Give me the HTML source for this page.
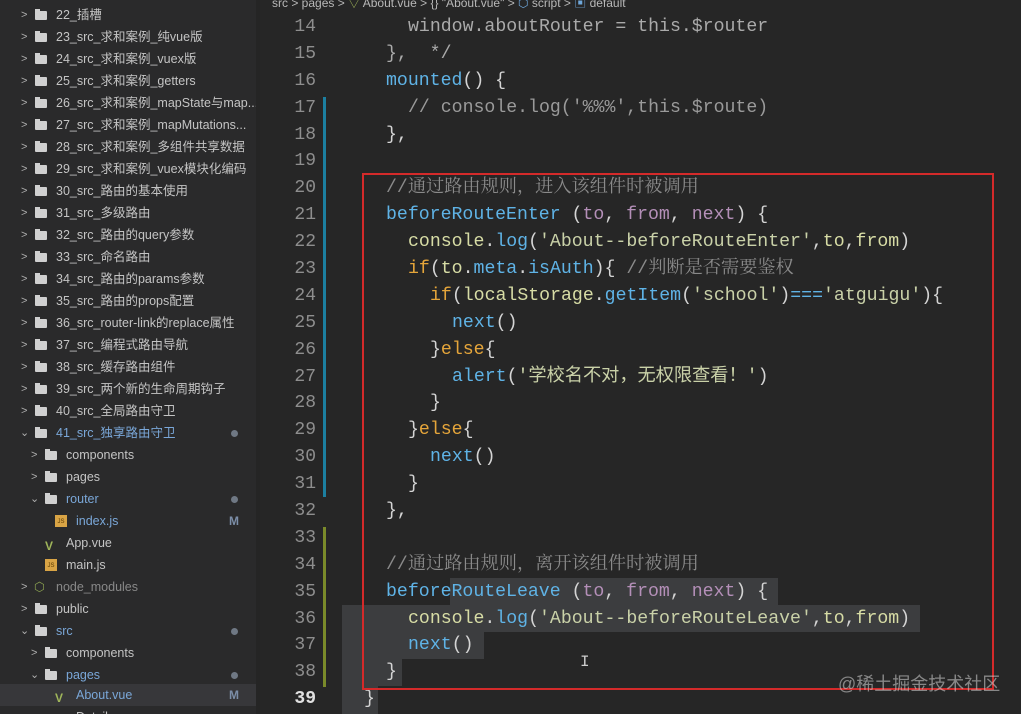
<!DOCTYPE html>
<html style="overflow:hidden;width:1021px;height:714px"><head><meta charset="utf-8"><style>
*{margin:0;padding:0;box-sizing:border-box}
html,body{overflow:hidden}
body{width:1021px;height:714px;overflow:hidden;background:#252525;position:relative;font-family:"Liberation Sans","Noto Sans CJK SC",sans-serif}
#side{position:absolute;left:0;top:0;width:256px;height:714px;background:#2a2a2b;overflow:hidden}
.r{position:absolute;left:0;width:256px;height:22px;line-height:22px;font-size:12.5px;color:#c4c4c4;white-space:nowrap;overflow:hidden}
.r .ch{position:absolute;top:0;color:#b0b0b0;font-size:11px}
.r .f{position:absolute;top:7px;width:12px;height:9px;background:#d0d0d0;border-radius:1px}
.r .f:before{content:"";position:absolute;left:0;top:-2px;width:5px;height:3px;background:#d0d0d0}
.r .t{position:absolute;top:0}
.r .dot{position:absolute;left:231px;top:8px;width:7px;height:7px;border-radius:50%;background:#6f7884}
.r .m{position:absolute;left:229px;top:0;color:#7c8ea8;font-weight:bold;font-size:12px}
.js{position:absolute;top:5px;width:12px;height:12px;background:#d9a445;font-size:6px;color:#5a3a00;line-height:14px;text-align:center}
.vue{position:absolute;top:3px;color:#9fb55a;font-size:12px;font-weight:bold}
.blue{color:#7aa7d8}
#ed{position:absolute;left:260px;top:0;width:761px;height:714px;background:#262626}
#bc{position:absolute;left:272px;top:-6px;font-size:12px;color:#b8b8b8;white-space:nowrap}
.ln{position:absolute;left:262px;width:54px;text-align:right;font-family:"Liberation Mono",monospace;font-size:18px;color:#8e8e8e;height:27px;line-height:27px}
.cl{position:absolute;height:27px;line-height:27px;font-family:"Liberation Mono","Noto Sans CJK SC",monospace;font-size:18.2px;color:#d4d4d4;white-space:pre}
.k{color:#e5a53a}.fn{color:#5fb3e6}.s{color:#c9d1a8}.v{color:#d7dca5}.p{color:#b48fb8}.c{color:#8a8a8a;font-family:"Liberation Mono","Noto Serif CJK SC",serif}
.sel{position:absolute;background:#3c3d3f}
</style></head><body>
<div id="side">
<div class="r" style="top:4px"><span class="ch" style="left:21px">&gt;</span><span class="f" style="left:35px"></span><span class="t" style="left:56px">22_插槽</span></div>
<div class="r" style="top:26px"><span class="ch" style="left:21px">&gt;</span><span class="f" style="left:35px"></span><span class="t" style="left:56px">23_src_求和案例_纯vue版</span></div>
<div class="r" style="top:48px"><span class="ch" style="left:21px">&gt;</span><span class="f" style="left:35px"></span><span class="t" style="left:56px">24_src_求和案例_vuex版</span></div>
<div class="r" style="top:70px"><span class="ch" style="left:21px">&gt;</span><span class="f" style="left:35px"></span><span class="t" style="left:56px">25_src_求和案例_getters</span></div>
<div class="r" style="top:92px"><span class="ch" style="left:21px">&gt;</span><span class="f" style="left:35px"></span><span class="t" style="left:56px">26_src_求和案例_mapState与map...</span></div>
<div class="r" style="top:114px"><span class="ch" style="left:21px">&gt;</span><span class="f" style="left:35px"></span><span class="t" style="left:56px">27_src_求和案例_mapMutations...</span></div>
<div class="r" style="top:136px"><span class="ch" style="left:21px">&gt;</span><span class="f" style="left:35px"></span><span class="t" style="left:56px">28_src_求和案例_多组件共享数据</span></div>
<div class="r" style="top:158px"><span class="ch" style="left:21px">&gt;</span><span class="f" style="left:35px"></span><span class="t" style="left:56px">29_src_求和案例_vuex模块化编码</span></div>
<div class="r" style="top:180px"><span class="ch" style="left:21px">&gt;</span><span class="f" style="left:35px"></span><span class="t" style="left:56px">30_src_路由的基本使用</span></div>
<div class="r" style="top:202px"><span class="ch" style="left:21px">&gt;</span><span class="f" style="left:35px"></span><span class="t" style="left:56px">31_src_多级路由</span></div>
<div class="r" style="top:224px"><span class="ch" style="left:21px">&gt;</span><span class="f" style="left:35px"></span><span class="t" style="left:56px">32_src_路由的query参数</span></div>
<div class="r" style="top:246px"><span class="ch" style="left:21px">&gt;</span><span class="f" style="left:35px"></span><span class="t" style="left:56px">33_src_命名路由</span></div>
<div class="r" style="top:268px"><span class="ch" style="left:21px">&gt;</span><span class="f" style="left:35px"></span><span class="t" style="left:56px">34_src_路由的params参数</span></div>
<div class="r" style="top:290px"><span class="ch" style="left:21px">&gt;</span><span class="f" style="left:35px"></span><span class="t" style="left:56px">35_src_路由的props配置</span></div>
<div class="r" style="top:312px"><span class="ch" style="left:21px">&gt;</span><span class="f" style="left:35px"></span><span class="t" style="left:56px">36_src_router-link的replace属性</span></div>
<div class="r" style="top:334px"><span class="ch" style="left:21px">&gt;</span><span class="f" style="left:35px"></span><span class="t" style="left:56px">37_src_编程式路由导航</span></div>
<div class="r" style="top:356px"><span class="ch" style="left:21px">&gt;</span><span class="f" style="left:35px"></span><span class="t" style="left:56px">38_src_缓存路由组件</span></div>
<div class="r" style="top:378px"><span class="ch" style="left:21px">&gt;</span><span class="f" style="left:35px"></span><span class="t" style="left:56px">39_src_两个新的生命周期钩子</span></div>
<div class="r" style="top:400px"><span class="ch" style="left:21px">&gt;</span><span class="f" style="left:35px"></span><span class="t" style="left:56px">40_src_全局路由守卫</span></div>
<div class="r" style="top:422px"><span class="ch" style="left:20px">⌄</span><span class="f" style="left:35px"></span><span class="t blue" style="left:56px">41_src_独享路由守卫</span><span class="dot"></span></div>
<div class="r" style="top:444px"><span class="ch" style="left:31px">&gt;</span><span class="f" style="left:45px"></span><span class="t" style="left:66px">components</span></div>
<div class="r" style="top:466px"><span class="ch" style="left:31px">&gt;</span><span class="f" style="left:45px"></span><span class="t" style="left:66px">pages</span></div>
<div class="r" style="top:488px"><span class="ch" style="left:30px">⌄</span><span class="f" style="left:45px"></span><span class="t blue" style="left:66px">router</span><span class="dot"></span></div>
<div class="r" style="top:510px"><span class="js" style="left:55px">JS</span><span class="t blue" style="left:76px">index.js</span><span class="m">M</span></div>
<div class="r" style="top:532px"><span class="vue" style="left:45px">V</span><span class="t" style="left:66px">App.vue</span></div>
<div class="r" style="top:554px"><span class="js" style="left:45px">JS</span><span class="t" style="left:66px">main.js</span></div>
<div class="r" style="top:576px"><span class="ch" style="left:21px">&gt;</span><span class="t" style="left:34px;color:#8aa050">⬡</span><span class="t" style="left:56px;color:#888">node_modules</span></div>
<div class="r" style="top:598px"><span class="ch" style="left:21px">&gt;</span><span class="f" style="left:35px"></span><span class="t" style="left:56px">public</span></div>
<div class="r" style="top:620px"><span class="ch" style="left:20px">⌄</span><span class="f" style="left:35px"></span><span class="t blue" style="left:56px">src</span><span class="dot"></span></div>
<div class="r" style="top:642px"><span class="ch" style="left:31px">&gt;</span><span class="f" style="left:45px"></span><span class="t" style="left:66px">components</span></div>
<div class="r" style="top:664px"><span class="ch" style="left:30px">⌄</span><span class="f" style="left:45px"></span><span class="t blue" style="left:66px">pages</span><span class="dot"></span></div>
<div class="r" style="top:684px;background:#37373a;height:22px"><span class="vue" style="left:55px">V</span><span class="t blue" style="left:76px">About.vue</span><span class="m">M</span></div>
<div class="r" style="top:706px;height:8px"><span class="vue" style="left:55px">V</span><span class="t" style="left:76px">Detail.vue</span></div>
</div>
<div id="ed"></div>
<div id="bc">src &gt; pages &gt; <span style="color:#9fb55a">▽</span> About.vue &gt; {} "About.vue" &gt; <span style="color:#6fa8dc">⬡</span> script &gt; <span style="color:#6fa8dc">▣</span> default</div>
<div style="position:absolute;left:323px;top:97px;width:3px;height:400px;background:#1c7fa0"></div>
<div style="position:absolute;left:323px;top:527px;width:3px;height:160px;background:#7a8a2a"></div>
<div class="sel" style="left:450px;top:578px;width:328px;height:27px"></div>
<div class="sel" style="left:342px;top:605px;width:578px;height:27px"></div>
<div class="sel" style="left:342px;top:632px;width:142px;height:27px"></div>
<div class="sel" style="left:342px;top:659px;width:60px;height:27px"></div>
<div class="sel" style="left:342px;top:686px;width:36px;height:28px"></div>
<div class="ln" style="top:14px">14</div><div class="ln" style="top:41px">15</div><div class="ln" style="top:68px">16</div><div class="ln" style="top:95px">17</div><div class="ln" style="top:122px">18</div><div class="ln" style="top:148px">19</div><div class="ln" style="top:175px">20</div><div class="ln" style="top:202px">21</div><div class="ln" style="top:229px">22</div><div class="ln" style="top:256px">23</div><div class="ln" style="top:283px">24</div><div class="ln" style="top:310px">25</div><div class="ln" style="top:337px">26</div><div class="ln" style="top:364px">27</div><div class="ln" style="top:390px">28</div><div class="ln" style="top:417px">29</div><div class="ln" style="top:444px">30</div><div class="ln" style="top:471px">31</div><div class="ln" style="top:498px">32</div><div class="ln" style="top:525px">33</div><div class="ln" style="top:552px">34</div><div class="ln" style="top:579px">35</div><div class="ln" style="top:606px">36</div><div class="ln" style="top:632px">37</div><div class="ln" style="top:659px">38</div><div class="ln" style="top:686px;color:#e0e0e0;font-weight:bold">39</div>
<div class="cl" style="left:408px;top:14px;color:#aaa">window.aboutRouter = this.$router</div>
<div class="cl" style="left:386px;top:41px;color:#aaa">},  */</div>
<div class="cl" style="left:386px;top:68px"><span class="fn">mounted</span>() {</div>
<div class="cl" style="left:408px;top:95px;color:#9a9a9a">// console.log('%%%',this.$route)</div>
<div class="cl" style="left:386px;top:122px">},</div>
<div class="cl c" style="left:386px;top:175px">//通过路由规则，进入该组件时被调用</div>
<div class="cl" style="left:386px;top:202px"><span class="fn">beforeRouteEnter</span> (<span class="p">to</span>, <span class="p">from</span>, <span class="p">next</span>) {</div>
<div class="cl" style="left:408px;top:229px"><span class="v">console</span>.<span class="fn">log</span>(<span class="s">'About--beforeRouteEnter'</span>,<span class="v">to</span>,<span class="v">from</span>)</div>
<div class="cl" style="left:408px;top:256px"><span class="k">if</span>(<span class="v">to</span>.<span class="fn">meta</span>.<span class="fn">isAuth</span>){ <span class="c">//判断是否需要鉴权</span></div>
<div class="cl" style="left:430px;top:283px"><span class="k">if</span>(<span class="v">localStorage</span>.<span class="fn">getItem</span>(<span class="s">'school'</span>)<span class="fn">===</span><span class="s">'atguigu'</span>){</div>
<div class="cl" style="left:452px;top:310px"><span class="fn">next</span>()</div>
<div class="cl" style="left:430px;top:337px">}<span class="k">else</span>{</div>
<div class="cl" style="left:452px;top:364px"><span class="fn">alert</span>(<span class="s">'学校名不对，无权限查看！'</span>)</div>
<div class="cl" style="left:430px;top:390px">}</div>
<div class="cl" style="left:408px;top:417px">}<span class="k">else</span>{</div>
<div class="cl" style="left:430px;top:444px"><span class="fn">next</span>()</div>
<div class="cl" style="left:408px;top:471px">}</div>
<div class="cl" style="left:386px;top:498px">},</div>
<div class="cl c" style="left:386px;top:552px">//通过路由规则，离开该组件时被调用</div>
<div class="cl" style="left:386px;top:579px"><span class="fn">beforeRouteLeave</span> (<span class="p">to</span>, <span class="p">from</span>, <span class="p">next</span>) {</div>
<div class="cl" style="left:408px;top:606px"><span class="v">console</span>.<span class="fn">log</span>(<span class="s">'About--beforeRouteLeave'</span>,<span class="v">to</span>,<span class="v">from</span>)</div>
<div class="cl" style="left:408px;top:632px"><span class="fn">next</span>()</div>
<div class="cl" style="left:386px;top:659px">}</div>
<div class="cl" style="left:364px;top:686px">}</div>
<div class="cl" style="left:580px;top:649px;color:#ccc;font-size:16px">I</div>
<div style="position:absolute;left:362px;top:173px;width:632px;height:517px;border:2px solid #d42a2a"></div>
<div style="position:absolute;left:838px;top:670px;font-size:18px;color:rgba(200,200,200,0.6)">@稀土掘金技术社区</div>
</body></html>
